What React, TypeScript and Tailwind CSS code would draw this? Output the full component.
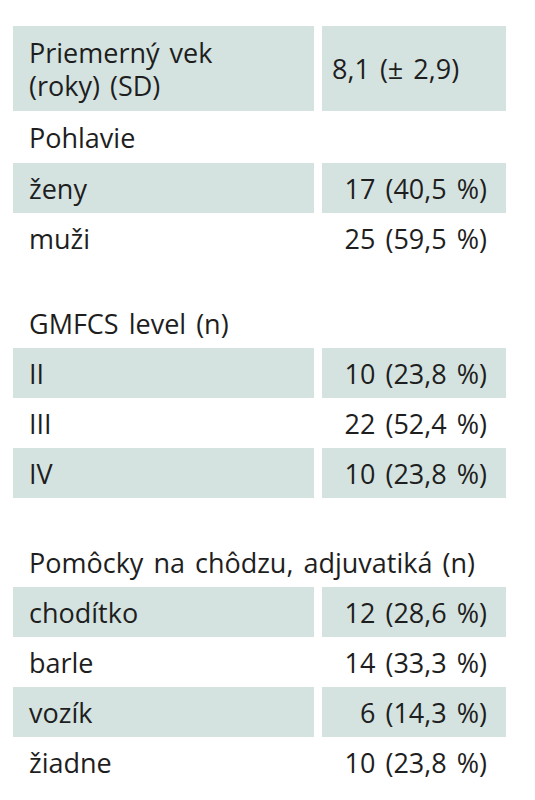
import React from 'react'

type Row = { label: string; value?: string; shaded?: boolean }

function Cells({ row }: { row: Row }) {
  const bg = row.shaded ? 'bg-[#d4e3e0]' : ''
  return (
    <>
      <div className={`${bg} flex items-center pl-4 h-[50px]`}>{row.label}</div>
      <div className={`${bg} flex items-center justify-end pr-[19px] h-[50px]`}>{row.value}</div>
    </>
  )
}

function Heading({ text, tall }: { text: string; tall?: boolean }) {
  return <div className={`col-span-2 flex items-center pl-4 ${tall ? 'h-[52px]' : 'h-[49px]'}`}>{text}</div>
}

export default function App() {
  return (
    <div
      className="min-h-screen bg-white pt-[26px] pl-[13px] text-[27px] text-[#1e1e1e] [word-spacing:3px]"
      style={{ fontFamily: '"Open Sans", "Liberation Sans", sans-serif' }}
    >
      <div className="grid grid-cols-[301px_184px] gap-x-2 leading-[33px]">
        <div className="bg-[#d4e3e0] flex items-center pl-4 h-[85px]">
          Priemerný vek
          <br />
          (roky) (SD)
        </div>
        <div className="bg-[#d4e3e0] flex items-center pl-[10px] h-[85px]">8,1 (± 2,9)</div>
        <Heading text="Pohlavie" tall />
        <Cells row={{ label: 'ženy', value: '17 (40,5 %)', shaded: true }} />
        <Cells row={{ label: 'muži', value: '25 (59,5 %)' }} />

        <div className="col-span-2 h-[36px]" />
        <Heading text="GMFCS level (n)" />
        <Cells row={{ label: 'II', value: '10 (23,8 %)', shaded: true }} />
        <Cells row={{ label: 'III', value: '22 (52,4 %)' }} />
        <Cells row={{ label: 'IV', value: '10 (23,8 %)', shaded: true }} />

        <div className="col-span-2 h-[40px]" />
        <Heading text="Pomôcky na chôdzu, adjuvatiká (n)" />
        <Cells row={{ label: 'chodítko', value: '12 (28,6 %)', shaded: true }} />
        <Cells row={{ label: 'barle', value: '14 (33,3 %)' }} />
        <Cells row={{ label: 'vozík', value: '6 (14,3 %)', shaded: true }} />
        <Cells row={{ label: 'žiadne', value: '10 (23,8 %)' }} />
      </div>
    </div>
  )
}
